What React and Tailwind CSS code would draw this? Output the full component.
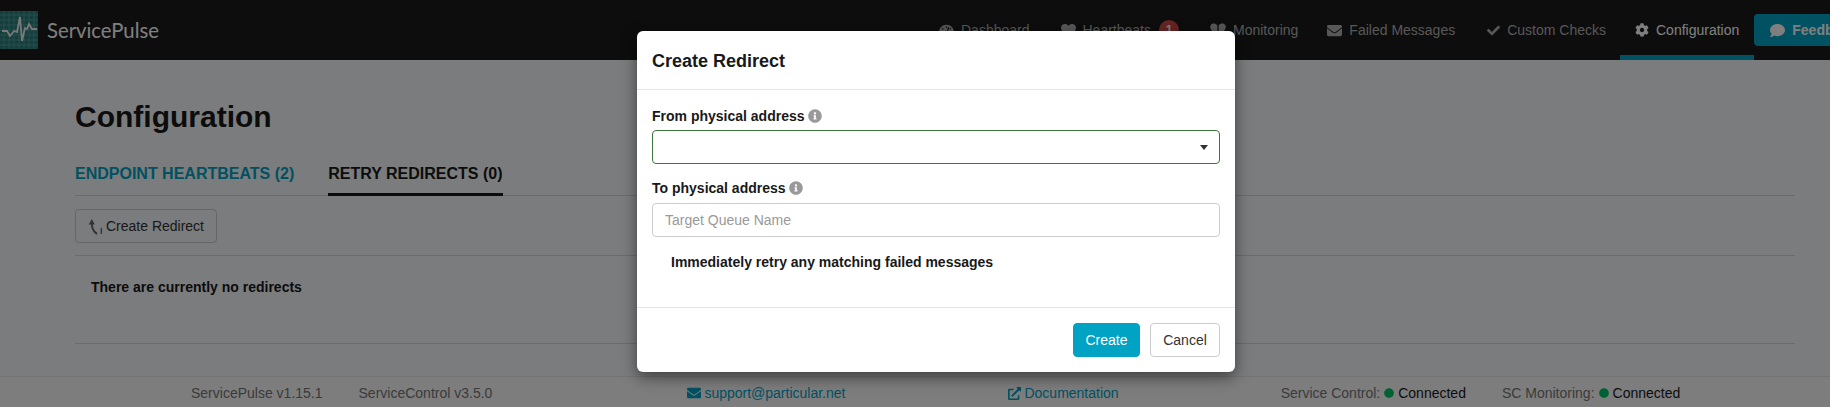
import { FaTachometerAlt, FaHeart, FaEnvelope, FaCheck, FaCog, FaComment, FaInfoCircle, FaExternalLinkAlt, FaCircle } from "react-icons/fa";

const sans = "font-['Liberation_Sans',Arial,sans-serif]";

const Logo = () => (
  <svg width="38" height="38" viewBox="0 0 38 38" className="shrink-0">
    <rect width="38" height="38" fill="#2c7c78" />
    {[4, 9, 14, 19, 24, 29, 34].map((p) => (
      <g key={p} stroke="#4a9f9b" strokeWidth="1">
        <line x1={p} y1="0" x2={p} y2="38" />
        <line x1="0" y1={p} x2="38" y2={p} />
      </g>
    ))}
    <path d="M2 20h5l3 5 4-5 3 1 3-15 2 24 3-13 2 1 2-5 3 5h5" fill="none" stroke="#f2f2f2" strokeWidth="1.800" />
  </svg>
);

const MonitorIcon = () => (
  <svg width="16" height="14" viewBox="0 0 16 14" className="shrink-0" fill="currentColor">
    <path d="M7.4 13 1.5 7.2C-.5 5-.3 1.8 2 .9c1.8-.7 4-.2 5.4 1.6z" />
    <path d="M8.6 13 14.500 7.2c2-2.2 1.800-5.400-.5-6.300-1.800-.7-4-.2-5.400 1.600z" />
  </svg>
);

const RedirectIcon = () => (
  <svg width="15" height="17" viewBox="0 0 14 16" className="shrink-0 text-[#666666]" fill="none" stroke="currentColor">
    <path d="M3.500 5C3.500 10 5 13 8.500 15" strokeWidth="1.800" />
    <path d="M3.500 1 .6 6h5.800z" fill="currentColor" stroke="none" />
    <path d="M12.500 9.500V15" strokeWidth="1.300" />
  </svg>
);

const NavItem = ({ icon, label, active, className = "" }) => (
  <a className={`flex h-[60px] items-center gap-[7px] ${active ? "border-b-[5px] border-[#00a3c4] pt-[5px] text-white" : "text-[#b0b0b0]"} ${className}`}>
    {icon}
    <span>{label}</span>
  </a>
);

const App = () => {
  return (
    <div className={`relative flex h-[407px] w-[1830px] flex-col overflow-hidden bg-[#f6f8fa] text-sm text-[#181919] ${sans}`}>
      <header className="flex h-[60px] shrink-0 items-center overflow-hidden bg-[#1a1a1a]">
        <Logo />
        <span className="ml-[9px] w-[112px] shrink-0 whitespace-nowrap font-['Lato',sans-serif] text-[20.3px] text-white">ServicePulse</span>
        <nav className="ml-[780px] flex shrink-0 items-center">
          <NavItem icon={<FaTachometerAlt className="size-[15px]" />} label="Dashboard" />
          <NavItem className="ml-[31px]" icon={<FaHeart className="size-[15px]" />} label="Heartbeats" />
          <span className="ml-2 flex size-5 items-center justify-center rounded-full bg-[#ce4844] text-xs font-bold text-white">1</span>
          <NavItem className="ml-[31px]" icon={<MonitorIcon />} label="Monitoring" />
          <NavItem className="ml-[29px]" icon={<FaEnvelope className="size-[15px]" />} label="Failed Messages" />
          <NavItem className="ml-[32px]" icon={<FaCheck className="size-[13px]" />} label="Custom Checks" />
          <NavItem className="ml-[14px] px-[15px]" active icon={<FaCog className="size-[14px]" />} label="Configuration" />
          <button className="flex h-8 w-[120px] shrink-0 items-center gap-[7px] rounded-[4px] bg-[#00a3c4] pl-4 font-bold text-white">
            <FaComment className="size-[15px]" />
            Feedback
          </button>
        </nav>
      </header>

      <main className="ml-[75px] mr-[35px] flex-1">
        <h1 className="mt-[40px] text-[30px] font-bold leading-[34px]">Configuration</h1>
        <div className="mt-[23px] flex h-[39px] gap-[34px] border-b border-[#d5d6d7] text-base font-bold">
          <a className="pt-[5px] text-[#00a3c4]">ENDPOINT HEARTBEATS (2)</a>
          <a className="h-[39px] border-b-[3px] border-[#181919] pt-[5px]">RETRY REDIRECTS (0)</a>
        </div>
        <div className="flex h-[60px] items-start border-b border-[#d5d6d7] pt-[13px]">
          <button className="flex h-[34px] w-[142px] items-center justify-center gap-[3px] rounded-[4px] border border-[#cccccc] text-[#333333]">
            <RedirectIcon />
            Create Redirect
          </button>
        </div>
        <div className="h-[88px] border-b border-[#d5d6d7] pl-4 pt-[21px] font-bold">There are currently no redirects</div>
      </main>

      <footer className="flex h-[31px] shrink-0 items-center border-t border-[#e7e7e7] bg-[#fafafa] pl-[191px] pt-[2px] text-[#777777]">
        <span>ServicePulse v1.15.1</span>
        <span className="ml-[36px]">ServiceControl v3.5.0</span>
        <a className="ml-[195px] flex items-center gap-[3px] text-[#00a3c4]"><FaEnvelope className="size-[14px]" />support@particular.net</a>
        <a className="ml-[163px] flex items-center gap-[3px] text-[#00a3c4]"><FaExternalLinkAlt className="size-[13px]" />Documentation</a>
        <span className="ml-[162px] flex items-center gap-1">Service Control: <FaCircle className="size-[10px] text-[#00c468]" /><span className="text-[#181919]">Connected</span></span>
        <span className="ml-9 flex items-center gap-1">SC Monitoring: <FaCircle className="size-[10px] text-[#00c468]" /><span className="text-[#181919]">Connected</span></span>
      </footer>

      <div className="absolute inset-0 bg-black/50" />

      <div className="absolute left-[637px] top-[31px] w-[598px] rounded-md bg-white shadow-[0_5px_15px_rgba(0,0,0,0.5)]">
        <div className="h-[59px] border-b border-[#e5e5e5] px-[15px] pt-[17px] text-lg font-bold leading-[27px]">Create Redirect</div>
        <div className="h-[217px] px-[15px] pt-[15px]">
          <label className="flex h-[21px] items-center gap-[3px] font-bold">
            From physical address <FaInfoCircle className="size-[14px] text-[#999999]" />
          </label>
          <div className="mt-1 flex h-[34px] items-center justify-end rounded-[4px] border border-[#3c763d] pr-[11px]">
            <span className="border-x-4 border-t-[5px] border-x-transparent border-t-[#333333]" />
          </div>
          <label className="mt-[13px] flex h-[21px] items-center gap-[3px] font-bold">
            To physical address <FaInfoCircle className="size-[14px] text-[#999999]" />
          </label>
          <input
            placeholder="Target Queue Name"
            className="mt-[5px] h-[34px] w-full rounded-[4px] border border-[#cccccc] px-3 outline-none placeholder:text-[#999999]"
          />
          <p className="ml-[19px] mt-[15px] font-bold leading-[21px]">Immediately retry any matching failed messages</p>
        </div>
        <div className="flex justify-end gap-[10px] border-t border-[#e5e5e5] p-[15px]">
          <button className="h-[34px] w-[67px] rounded-[4px] border border-[#00a3c4] bg-[#00a3c4] text-white">Create</button>
          <button className="h-[34px] w-[70px] rounded-[4px] border border-[#cccccc] text-[#333333]">Cancel</button>
        </div>
      </div>
    </div>
  );
};

export default App;
